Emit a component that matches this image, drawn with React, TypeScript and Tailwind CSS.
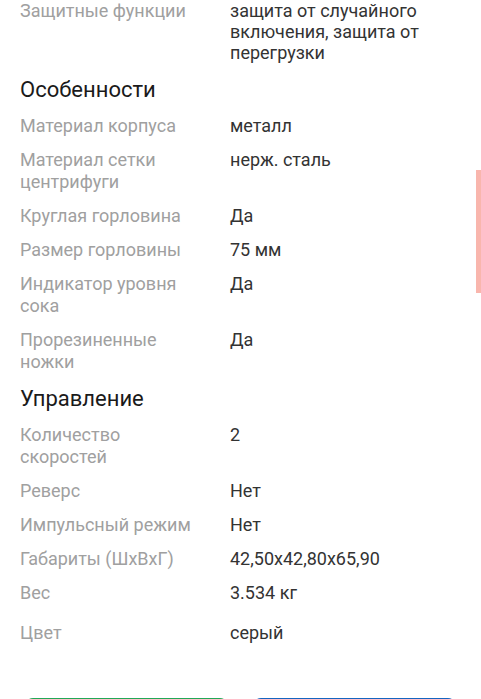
import React from "react";

type Row = { label: string; value: string; extra?: string };

const sections: { title?: string; rows: Row[] }[] = [
  {
    rows: [
      {
        label: "Защитные функции",
        value: "защита от случайного включения, защита от перегрузки",
        extra: "leading-[21px] pb-[13px]",
      },
    ],
  },
  {
    title: "Особенности",
    rows: [
      { label: "Материал корпуса", value: "металл" },
      { label: "Материал сетки центрифуги", value: "нерж. сталь" },
      { label: "Круглая горловина", value: "Да" },
      { label: "Размер горловины", value: "75 мм" },
      { label: "Индикатор уровня сока", value: "Да" },
      { label: "Прорезиненные ножки", value: "Да" },
    ],
  },
  {
    title: "Управление",
    rows: [
      { label: "Количество скоростей", value: "2" },
      { label: "Реверс", value: "Нет" },
      { label: "Импульсный режим", value: "Нет" },
      { label: "Габариты (ШхВхГ)", value: "42,50x42,80x65,90" },
      { label: "Вес", value: "3.534 кг", extra: "leading-[22px] pb-[18px]" },
      { label: "Цвет", value: "серый" },
    ],
  },
];

function SpecRow({ row }: { row: Row }) {
  return (
    <div className={`flex pl-5 pr-5 text-[18px] ${row.extra ?? "leading-[22px] pb-3"}`}>
      <div className="w-[210px] shrink-0 pr-[28px] text-[#a0a0a0]">{row.label}</div>
      <div className="flex-1 pr-2 text-[#333333]">{row.value}</div>
    </div>
  );
}

export default function App() {
  return (
    <div className="relative w-[481px] h-[699px] overflow-hidden bg-white font-['Roboto','Liberation_Sans',sans-serif]">
      <div>
        {sections.map((s, i) => (
          <div key={i}>
            {s.title && (
              <div className="pl-5 pt-[1px] pb-[12px] text-[22px] leading-[26px] text-[#1a1a1a]">{s.title}</div>
            )}
            {s.rows.map((r) => (
              <SpecRow key={r.label} row={r} />
            ))}
          </div>
        ))}
      </div>

      {/* bottom action buttons, cut off by the viewport */}
      <div className="flex gap-[25px] px-[25px] mt-[42px]">
        <button className="h-12 flex-1 rounded-lg bg-[#21a857]" />
        <button className="h-12 flex-1 rounded-lg bg-[#1565c0]" />
      </div>

      {/* scroll indicator */}
      <div className="absolute right-0 top-[170px] w-[5px] h-[123px] bg-[#f9b6ad]" />
    </div>
  );
}
